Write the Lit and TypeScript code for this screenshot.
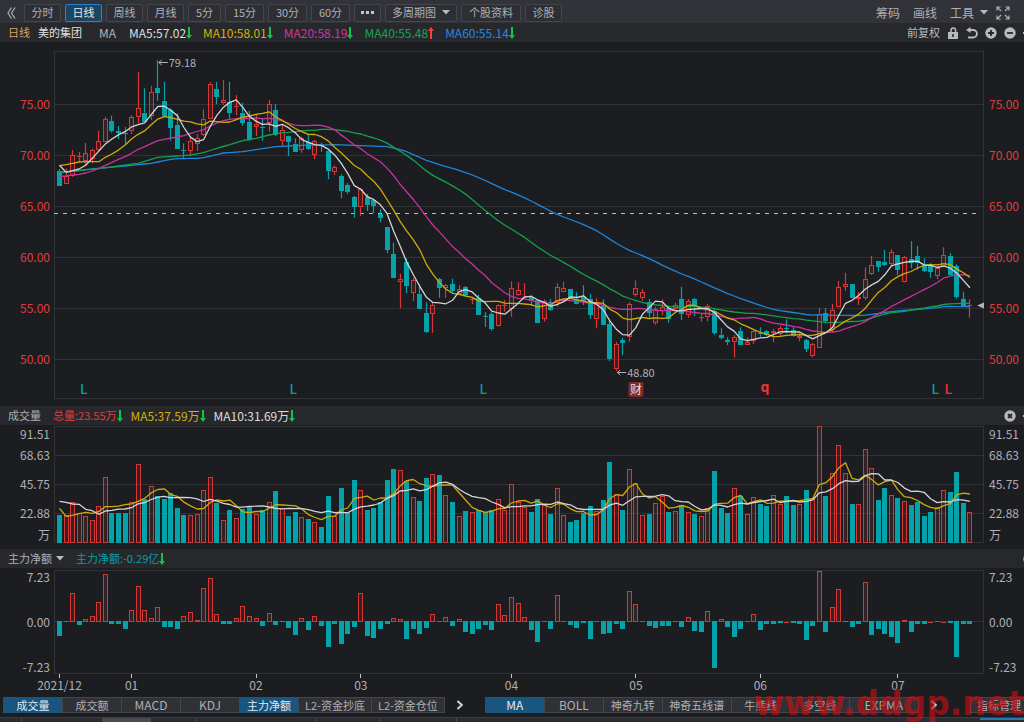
import { LitElement, html, svg, css } from "lit";
import { customElement, state } from "lit/decorators.js";
import { classMap } from "lit/directives/class-map.js";

type Candle = { up: boolean; high: number; low: number; top: number; bottom: number };

// Each row: r(ise) or c(yan fall), high, low, body top, body bottom, in thirds of a pixel.
const read = (base: number, rows: string): Candle[] =>
  rows
    .trim()
    .split(/\s*;\s*/)
    .map((row) => {
      const [kind, ...n] = row.split(" ");
      const [high, low, top, bottom] = n.map((v) => Number(v) + base);
      return { up: kind === "r", high, low, top, bottom };
    });

const CANDLES: Candle[] = [
  ...read(24, `c 357 408 363 408;r 355 402 378 402;r 300 380 316 378;r 306 335 318 322;r 279 348 310 333;
    r 296 340 300 328;r 242 306 273 300;r 200 275 208 275;c 197 248 213 244;c 228 267 242 248;
    c 231 284 248 252;r 196 252 202 244;r 66 220 175 202;c 115 215 188 215;r 107 210 127 199;
    c 31 152 114 129;c 96 197 152 197;c 175 272 180 235;c 190 298 225 298;c 280 325 300 304;
    r 261 312 273 302;r 252 303 264 281;r 178 258 206 256;r 96 207 101 207;c 96 163 117 140;
    r 90 164 150 160;c 96 206 157 188;r 135 196 168 172;c 158 227 188 219;c 183 272 216 270;
    r 193 258 222 230;c 204 272 230 235;r 150 245 162 220;c 163 259 180 256;r 225 288 240 272`),
  ...read(234, `c 47 108 48 66;c 55 97 71 97;r 50 98 55 90;c 43 90 65 88;r 60 117 64 104;
    c 68 95 74 77;c 87 178 92 153;r 136 165 142 157;c 163 235 169 212;c 190 222 195 217;
    c 228 293 231 260;r 205 288 207 262;c 222 273 232 254;c 238 279 240 258;c 268 307 281 293;
    c 320 400 321 389;c 368 473 402 473;r 461 565 477 486;c 415 520 425 497;r 473 543 481 518;
    c 492 566 523 566;c 547 639 579 636;r 548 638 556 581;c 473 533 478 503;r 492 533 496 503;
    c 476 520 492 513;r 496 524 507 523;c 498 527 501 526;r 530 552 537 540;c 524 585 533 585;
    c 577 621 588 592;c 577 632 582 627;r 553 620 554 619;r 540 575 555 558`),
  ...read(654, `r 64 170 85 148;r 67 107 90 104;r 70 118 110 113;c 106 138 110 124;c 120 188 120 188;
    r 118 185 122 176;c 118 152 127 150;r 70 140 81 130;r 65 97 85 95;c 87 116 87 116;
    c 97 133 116 131;c 76 135 112 124;c 102 176 117 165;r 115 205 127 178;c 118 195 135 195;
    c 183 303 193 298;r 245 333 253 328;c 233 286 240 248;r 127 245 132 232;r 61 110 83 104;
    r 87 122 97 115;c 117 172 125 158;r 140 195 147 190;r 118 165 142 152;c 140 188 145 177;
    r 128 150 135 148;c 80 180 117 161;r 117 173 124 166;c 114 168 118 138;r 160 185 170 174;
    r 132 184 137 170;c 146 224 153 219;c 205 238 224 233;c 232 255 240 245;r 226 293 232 245;
    c 202 255 213 255`),
  ...read(534, `r 352 375 366 374;r 328 372 332 362;c 322 350 338 343;c 330 348 333 345;r 326 367 332 340;
    r 318 352 325 341;c 298 340 325 328;c 318 350 330 347;r 340 364 348 353;c 357 396 361 386;
    r 368 412 373 407;r 263 383 281 383;c 265 310 279 303;r 252 338 271 330;r 183 262 202 260;
    r 158 212 193 200;c 192 235 192 235;r 216 255 232 236;r 142 240 178 233;r 108 165 136 163;
    c 122 155 123 140;c 90 138 125 136;r 88 136 97 132;c 105 165 105 150;r 108 187 112 185;
    c 63 145 117 128;c 78 150 108 130;c 115 156 137 153;c 130 173 137 156;r 138 178 145 167;
    r 82 140 105 142;c 100 165 108 164;c 133 236 138 230;c 215 262 238 262;r 238 293 255 258`),
];

// Top edge of each volume column, in thirds of a pixel.
const VOLUME = [
  346, 346, 305, 338, 349, 361, 319, 232, 340, 340, 340, 307, 192, 296, 259, 289, 296, 279, 323, 344,
  346, 343, 271, 232, 308, 361, 329, 355, 326, 319, 343, 329, 307, 273, 323, 349, 337, 352, 358, 367,
  382, 287, 349, 265, 337, 239, 271, 330, 323, 307, 241, 206, 211, 244, 291, 304, 234, 223, 226, 286,
  307, 349, 332, 337, 331, 337, 331, 296, 330, 251, 307, 321, 337, 296, 316, 343, 263, 344, 366, 360,
  340, 318, 333, 301, 186, 283, 329, 206, 248, 344, 343, 310, 287, 337, 333, 315, 337, 341, 347, 325,
  213, 323, 340, 265, 288, 341, 291, 312, 317, 285, 313, 287, 315, 311, 270, 294, 79, 287, 220, 136,
  220, 312, 311, 147, 203, 300, 265, 286, 295, 304, 315, 307, 348, 337, 322, 271, 276, 217, 310, 336,
];

// Signed height of each net-inflow column, in thirds of a pixel.
const FLOW = [
  -44, 4, 87, -11, 9, 17, 60, 144, -10, -8, -25, 36, 107, 36, 12, 45, -17, -17, -25, 17,
  29, 6, 101, 132, 25, -8, -8, 12, 48, 17, 12, -14, 26, -11, -2, -20, -41, 12, -28, 17,
  -14, -78, -8, -70, -38, -17, 87, -44, -50, -23, -8, 12, 9, -53, -23, -38, -22, 23, 2, 15,
  -14, 9, -32, -38, -23, -11, -28, 54, 20, 75, 57, 15, -28, -64, 4, -23, 81, 4, -11, -20,
  -5, -53, 4, -38, -35, -10, -23, 93, 54, 4, -14, -22, -14, -14, 4, -17, 15, -31, -34, 33,
  -140, 9, -17, -47, -25, 4, 25, -28, -10, -8, -5, 1, -5, -8, -58, -14, 154, -33, 45, 99,
  -1, -17, -10, 120, -41, -25, -38, -47, -67, 7, -32, -8, -10, 1, 4, 1, -5, -107, -8, -8,
];

type Knot = [number, number];

/** Moving average; the days before a full window exist are interpolated between the given knots. */
function average(values: number[], span: number, lead: Knot[]): number[] {
  return values.map((_, i) => {
    if (i >= span - 1) {
      let sum = 0;
      for (let k = i - span + 1; k <= i; k++) sum += values[k];
      return sum / span;
    }
    const next = lead.findIndex((k) => k[0] >= i);
    if (next < 0) return lead[lead.length - 1][1];
    if (next === 0) return lead[0][1];
    const [a, b] = [lead[next - 1], lead[next]];
    return a[1] + ((b[1] - a[1]) * (i - a[0])) / (b[0] - a[0]);
  });
}
const each = (list: number[], add = 0): Knot[] => list.map((v, i) => [i, v + add]);
const raise = (list: Knot[], add: number): Knot[] => list.map(([i, v]) => [i, v + add]);

const CLOSES = CANDLES.map((c) => (c.up ? c.top : c.bottom));
const PRICE_LINES: [string, number[]][] = [
  ["#1c86dc", average(CLOSES, 60, raise([[0, 368], [5, 357], [10, 348], [14, 340], [17, 328], [18, 326], [21, 325],
    [22, 323], [25, 309], [28, 305], [31, 296], [33, 290], [37, 286], [42, 284], [46, 287], [50, 290], [52, 299],
    [53, 305], [56, 331], [59, 350]], 24))],
  ["#14a04a", average(CLOSES, 40, raise([[0, 366], [3, 362], [6, 355], [9, 348], [12, 340], [15, 322], [17, 319],
    [19, 317], [20, 315], [22, 308], [24, 295], [26, 284], [28, 272], [30, 265], [32, 255], [34, 248], [35, 247],
    [38, 241]], 24))],
  ["#c8329c", average(CLOSES, 20, each([379, 378, 375, 373, 369, 363, 356, 346, 337, 328, 320, 310, 298, 290, 281,
    272, 268, 264, 261], 24))],
  ["#d0aa08", average(CLOSES, 10, each([347, 344, 340, 336, 335, 335, 335, 322, 312], 24))],
  ["#d4d4d6", average(CLOSES, 5, each([346, 367, 362, 357], 24))],
];
const VOLUME_LINES: [string, number[]][] = [
  ["#d0aa08", average(VOLUME, 5, each([325, 349, 346, 341]))],
  ["#d4d4d6", average(VOLUME, 10, each([304, 307, 312, 313, 328, 332, 343, 333, 331]))],
];

const MONTHS: [number, string][] = [
  [0, "2021/12"], [11, "01"], [30, "02"], [46, "03"], [69, "04"], [88, "05"], [107, "06"], [128, "07"],
];
const PERIODS = ["分时", "日线", "周线", "月线", "5分", "15分", "30分", "60分"];
const AVERAGES: [string, string, boolean][] = [
  ["MA5:57.02", "white", false],
  ["MA10:58.01", "yellow", false],
  ["MA20:58.19", "pink", false],
  ["MA40:55.48", "green", true],
  ["MA60:55.14", "blue", false],
];
const PRICES = ["75.00", "70.00", "65.00", "60.00", "55.00", "50.00"];
const VOLUMES = ["91.51", "68.63", "45.75", "22.88", "万"];
const FLOWS = ["7.23", "0.00", "-7.23"];
const LOWER_TABS = ["成交量", "成交额", "MACD", "KDJ", "主力净额", "L2-资金抄底", "L2-资金仓位"];
const UPPER_TABS = ["MA", "BOLL", "神奇九转", "神奇五线谱", "牛熊线", "多空线", "EXPMA"];

const trend = (up: boolean) => html`<svg width="6" height="12" viewBox="0 0 6 12" aria-hidden="true">
  <path fill=${up ? "#ff3b3b" : "#12c24e"} d=${up ? "M3 0 6 4H4V12H2V4H0Z" : "M3 12 6 8H4V0H2V8H0Z"} />
</svg>`;
const caret = html`<svg width="8" height="5" viewBox="0 0 8 5" aria-hidden="true"><path d="M0 0H8L4 4.5Z" fill="#b9babd" /></svg>`;
const chevron = html`<svg width="8" height="10" viewBox="0 0 8 10" aria-hidden="true">
  <path d="M1.5 1 5.8 5 1.5 9" fill="none" stroke="currentColor" stroke-width="2" /></svg>`;
const gear = html`<svg width="12" height="12" viewBox="0 0 12 12" aria-hidden="true">
  <circle cx="6" cy="6" r="3" fill="none" stroke="currentColor" stroke-width="2" />
  <path d="M6 0V3M6 9V12M0 6H3M9 6H12M2 2 4 4M8 8 10 10M10 2 8 4M4 8 2 10" stroke="currentColor" stroke-width="2" /></svg>`;
const disc = (mark: string) => html`<svg width="12" height="12" viewBox="0 0 12 12" aria-hidden="true">
  <circle cx="6" cy="6" r="5.7" fill="currentColor" /><path d=${mark} stroke="#26282c" stroke-width="1.8" /></svg>`;

@customElement("app-root")
export class AppRoot extends LitElement {
  @state() private plotWidth = 930;
  @state() private period = "日线";
  @state() private overlay = "MA";
  private observer?: ResizeObserver;

  static styles = css`
    :host {
      display: block;
      position: relative;
      overflow: hidden;
      background: #1c1d21;
      color: #aeb0b4;
      font: 11px/16px "Noto Sans CJK SC", "Noto Sans", sans-serif;
    }
    svg { display: block; flex: none; }
    button, select {
      margin: 0;
      padding: 0;
      border: 0;
      background: none;
      color: inherit;
      font: inherit;
      white-space: nowrap;
      cursor: pointer;
    }
    select { appearance: none; }
    .toolbar, .band, .tabs, .strip, .icons, .group, .tools { display: flex; align-items: center; }
    .toolbar {
      height: 23px;
      padding: 2px 14px 0 7px;
      box-sizing: border-box;
      gap: 4px;
      background: #323338;
    }
    .collapse { width: 13px; }
    .period {
      display: flex;
      align-items: center;
      justify-content: center;
      gap: 6px;
      box-sizing: border-box;
      height: 18px;
      min-width: 37px;
      padding: 0 6px;
      line-height: 15px;
      border: 1px solid #45464b;
      border-radius: 2px;
      background: #2e2f34;
    }
    .period.narrow { min-width: 33px; }
    .period.wide { min-width: 39px; }
    .period.dots { min-width: 27px; }
    .period.roomy { min-width: 60px; }
    .period.picked { border-color: #1f86cf; background: #1d4460; color: #e4e8ec; }
    .menu select { padding-right: 14px; line-height: 15px; }
    .menu svg { margin-left: -14px; pointer-events: none; }
    .push { margin-left: auto; }
    .tools { gap: 13px; font-size: 12px; }
    .tools button { display: flex; align-items: center; gap: 6px; }
    .screen { margin-left: 4px; }
    .band {
      height: 19px;
      padding-left: 8px;
      background: #26282c;
      line-height: 15px;
    }
    .readings { display: flex; gap: 11px; }
    .readings.tight { gap: 8px; }
    .reading { display: flex; align-items: center; font-size: 12px; line-height: 15px; white-space: nowrap; }
    .small { font-size: 11px; }
    .orange { color: #d9a066; }
    .white { color: #dededf; }
    .yellow { color: #d6b008; }
    .pink { color: #cf35a2; }
    .green { color: #14a84e; }
    .blue { color: #1e8ce4; }
    .red { color: #e03c3c; }
    .teal { color: #0a9ea4; }
    .name { margin: 0 17px 0 8px; color: #e0e0e2; font-size: 11px; font-weight: 400; }
    .kind { margin-right: 13px; font-size: 12px; }
    .icons { gap: 7px; color: #b9babd; }
    .bleed { margin-right: -11px; }
    .panel { display: grid; grid-template-columns: 54px minmax(0, 1fr) 40px; }
    .panel svg { width: 100%; overflow: visible; }
    .scale { margin: 0; padding: 0 5px; list-style: none; display: grid; align-content: start; font-size: 12px; }
    .scale li { display: flex; align-items: center; }
    .scale.left { padding: 0 4px 0 0; justify-items: end; }
    .scale.price { grid-auto-rows: 51px; padding-top: 36px; color: #e03c3c; }
    .volume { grid-template-rows: 18px 24px 34px 24px 20px; }
    .flow { grid-template-rows: 18px 72px 18px; }
    .picker { display: flex; align-items: center; margin-right: 12px; }
    .picker select { padding-right: 12px; }
    .picker svg { margin-left: -8px; pointer-events: none; }
    .tabs { height: 16px; padding-left: 3px; }
    .group { border-right: 1px solid #45464b; }
    .tab {
      box-sizing: border-box;
      height: 16px;
      min-width: 59px;
      padding: 0 6px;
      line-height: 14px;
      border: 1px solid #45464b;
      border-right: 0;
      background: #303136;
    }
    .tab.picked { background: #185680; border-color: #185680; color: #e4e8ec; }
    .tab.latin { font-size: 12px; }
    .tab.last { min-width: 69px; }
    .next { padding: 0 11px; color: #d0d1d3; }
    .second { margin-left: 10px; }
    .manage { margin-left: auto; margin-right: -6px; min-width: 60px; text-align: left; }
    .strip {
      height: 5px;
      margin-top: 4px;
      background: #2b2c31;
      border-top: 1px solid #3c3d42;
      box-sizing: border-box;
    }
    .strip span { height: 4px; box-sizing: border-box; border-right: 1px solid #44454a; }
    .strip .lit { background: #4a4b50; }
    .strip .current { width: 44px; margin-left: auto; border-top: 2px solid #1f78b8; border-right: 0; }
    .watermark {
      position: absolute;
      right: 0;
      bottom: -2px;
      color: rgba(196, 14, 18, 0.66);
      font: bold 33px/40px "DejaVu Sans", sans-serif;
      pointer-events: none;
    }
    .note { font-size: 11px; fill: #aeb0b4; }
    .date { font-size: 12px; fill: #aeb0b4; text-anchor: middle; }
    .mark { font: 500 14px "Noto Sans", sans-serif; text-anchor: middle; }
    .bold { font-weight: 700; }
    .badge { font-size: 12px; fill: #ecdcdc; text-anchor: middle; }
  `;

  firstUpdated() {
    const plot = this.renderRoot.querySelector(".plot");
    if (!plot) return;
    this.observer = new ResizeObserver((entries) => {
      this.plotWidth = Math.round(entries[0].contentRect.width);
    });
    this.observer.observe(plot);
  }

  disconnectedCallback() {
    super.disconnectedCallback();
    this.observer?.disconnect();
  }

  private x(i: number) {
    return ((5.5 + 6.55 * i) * this.plotWidth) / 930;
  }

  private centre(i: number) {
    return Math.floor(this.x(i)) + 0.5;
  }

  private curve([color, values]: [string, number[]], lift = 0) {
    const points = values.map((v, i) => `${this.x(i).toFixed(1)},${(v / 3 - lift).toFixed(1)}`).join(" ");
    return svg`<polyline points=${points} fill="none" stroke=${color} stroke-width="1.3" stroke-linejoin="round" />`;
  }

  private frame(top: number, bottom: number, lines: number[]) {
    return svg`<rect x="0.5" y=${top} width=${this.plotWidth - 1} height=${bottom - top} fill="none" stroke="#323337" />
      ${lines.map((y) => svg`<path d="M0 ${y}H${this.plotWidth}" stroke="#323337" />`)}`;
  }

  private column(i: number, top: number, bottom: number, up: boolean) {
    const c = this.centre(i);
    const t = Math.round(top);
    const b = Math.max(Math.round(bottom), t + 1);
    if (!up) return svg`<rect x=${c - 2.5} y=${t} width="5" height=${b - t} fill="#04a3aa" />`;
    if (b - t < 3) return svg`<rect x=${c - 2.5} y=${t} width="5" height=${b - t} fill="#d63838" />`;
    return svg`<rect x=${c - 2} y=${t + 0.5} width="4" height=${b - t - 1} fill="#cf3838" fill-opacity="0.14" stroke="#d63838" />`;
  }

  private candle(c: Candle, i: number) {
    const m = this.centre(i);
    const color = c.up ? "#d63838" : "#04a3aa";
    return svg`<path d="M${m} ${c.high / 3}V${c.top / 3}M${m} ${c.bottom / 3}V${c.low / 3}" stroke=${color} stroke-width="1.2" />
      ${this.column(i, c.top / 3, c.bottom / 3, c.up)}`;
  }

  private priceChart() {
    const w = this.plotWidth;
    const low = this.x(85);
    const high = this.x(15);
    const marks: [number, string, string][] = [
      [3.7, "L", "#0a9ea4"], [35.7, "L", "#0a9ea4"], [64.7, "L", "#0a9ea4"], [107.7, "q", "#f03434"],
      [133.7, "L", "#0a9ea4"], [135.7, "L", "#f03434"],
    ];
    return html`<svg class="plot" height="364" role="img" aria-label="日线">
      ${this.frame(9.5, 356.5, [62.5, 113.5, 164.5, 215.5, 266.5, 317.5])}
      <path d="M0 171.5H${w - 8}" stroke="#e0c440" stroke-dasharray="4 5" />
      ${CANDLES.map((c, i) => this.candle(c, i))}
      ${PRICE_LINES.map((l) => this.curve(l))}
      <path d="M${high + 1} 20.5H${high + 10}M${high + 4} 18 ${high + 1} 20.5 ${high + 4} 23" fill="none" stroke="#aeb0b4" />
      <text class="note" x=${high + 11} y="25">79.18</text>
      <path d="M${low + 1} 330.5H${low + 10}M${low + 4} 328 ${low + 1} 330.5 ${low + 4} 333" fill="none" stroke="#aeb0b4" />
      <text class="note" x=${low + 11} y="335">48.80</text>
      ${marks.map(([i, t, color]) => svg`<text class="mark ${t === "q" ? "bold" : ""}" x=${this.x(i)} y=${t === "q" ? 350 : 352} fill=${color}>${t}</text>`)}
      <rect x=${this.x(88) - 7.5} y="340" width="15" height="15" rx="2" fill="#7e2b2d" />
      <text class="badge" x=${this.x(88)} y="352">财</text>
      <path d="M${w - 7} 263.5 ${w} 260.5V266.5Z" fill="#b4b5b8" />
    </svg>`;
  }

  private volumeChart() {
    return html`<svg height="124" role="img" aria-label="成交量">
      ${this.frame(1.5, 117.5, [30.5, 59.5, 88.5])}
      ${VOLUME.map((v, i) => this.column(i, v / 3 - 25, 118, CANDLES[i].up))}
      ${VOLUME_LINES.map((l) => this.curve(l, 25))}
    </svg>`;
  }

  private flowChart() {
    return html`<svg height="129" role="img" aria-label="主力净额">
      ${this.frame(2.5, 105.5, [53.5])}
      ${FLOW.map((v, i) => (v > 0 ? this.column(i, 54 - v / 3, 54, true) : this.column(i, 53, 53 - v / 3, false)))}
      ${MONTHS.map(([i, label]) => svg`<path d="M${this.centre(i)} 106V110" stroke="#c4c5c8" />
        <text class="date" x=${this.x(i)} y="122">${label}</text>`)}
    </svg>`;
  }

  private scale(kind: string, side: string, labels: string[]) {
    return html`<ul class="scale ${side} ${kind}">${labels.map((l) => html`<li>${l}</li>`)}</ul>`;
  }

  private panel(kind: string, labels: string[], chart: unknown) {
    return html`<section class="panel">${this.scale(kind, "left", labels)}${chart}${this.scale(kind, "right", labels)}</section>`;
  }

  private tab(label: string, picked: boolean, pick: () => void) {
    const classes = { tab: true, picked, latin: /^[A-Z]+$/.test(label), last: label === "EXPMA" || label === "神奇五线谱" };
    return html`<button class=${classMap(classes)} aria-pressed=${picked} @click=${pick}>${label}</button>`;
  }

  render() {
    return html`
      <nav class="toolbar">
        <button class="collapse" aria-label="收起">
          <svg width="9" height="12" viewBox="0 0 9 12"><path d="M4.5 .5 1 6 4.5 11.5M8 .5 4.5 6 8 11.5" fill="none" stroke="#aeb0b4" stroke-width="1.2" /></svg>
        </button>
        ${PERIODS.map((p) => html`<button
          class=${classMap({ period: true, picked: p === this.period, narrow: p === "5分", wide: p.length === 3 })}
          aria-pressed=${p === this.period} @click=${() => (this.period = p)}>${p}</button>`)}
        <button class="period dots" aria-label="更多周期">
          <svg width="13" height="3" viewBox="0 0 13 3"><path d="M0 0H3V3H0ZM5 0H8V3H5ZM10 0H13V3H10Z" fill="#c4c5c8" /></svg>
        </button>
        <label class="period menu"><select aria-label="多周期图"><option>多周期图</option></select>${caret}</label>
        <button class="period roomy">个股资料</button>
        <button class="period">诊股</button>
        <div class="tools push">
          <button>筹码</button><button>画线</button><button aria-haspopup="menu">工具 ${caret}</button>
        </div>
        <button class="screen" aria-label="全屏">
          <svg width="14" height="14" viewBox="0 0 14 14" fill="none" stroke="#aeb0b4" stroke-width="1.2">
            <path d="M1 4.5V1H4.5M9.5 1H13V4.5M13 9.5V13H9.5M4.5 13H1V9.5M1 1 5 5M13 1 9 5M13 13 9 9M1 13 5 9" /></svg>
        </button>
      </nav>

      <header class="band">
        <span class="orange">日线</span>
        <h1 class="name">美的集团</h1>
        <span class="kind">MA</span>
        <div class="readings">
          ${AVERAGES.map(([text, color, up]) => html`<span class="reading ${color}">${text}${trend(up)}</span>`)}
        </div>
        <div class="icons bleed push">
          <button>前复权</button>
          <button aria-label="锁定"><svg width="12" height="12" viewBox="0 0 12 12">
            <path d="M1 5H11V12H1Z" fill="currentColor" /><path d="M4 5V3.2A2.3 2.3 0 0 1 8.6 3.2V5" fill="none" stroke="currentColor" stroke-width="1.5" />
            <path d="M5.2 7H6.8V10H5.2Z" fill="#26282c" /></svg></button>
          <button aria-label="撤销"><svg width="12" height="12" viewBox="0 0 12 12">
            <path d="M4.5 0V6L0 3Z" fill="currentColor" /><path d="M3 3H7.2A3.5 3.5 0 0 1 7.2 10.5H2" fill="none" stroke="currentColor" stroke-width="1.8" /></svg></button>
          <button aria-label="放大">${disc("M6 3V9M3 6H9")}</button>
          <button aria-label="缩小">${disc("M3 6H9")}</button>
          <button aria-label="设置">${gear}</button>
        </div>
      </header>
      ${this.panel("price", PRICES, this.priceChart())}

      <header class="band">
        <span class="picker">成交量</span>
        <div class="readings tight">
          <span class="reading small red">总量:23.55万${trend(false)}</span>
          <span class="reading yellow">MA5:37.59万${trend(false)}</span>
          <span class="reading white">MA10:31.69万${trend(false)}</span>
        </div>
        <div class="icons bleed push">
          <button aria-label="关闭">${disc("M4 4 8 8M8 4 4 8")}</button>
          <button aria-label="设置">${gear}</button>
        </div>
      </header>
      ${this.panel("volume", VOLUMES, this.volumeChart())}

      <header class="band">
        <label class="picker"><select aria-label="指标"><option>主力净额</option></select>${caret}</label>
        <span class="reading small teal">主力净额:-0.29亿${trend(false)}</span>
        <div class="icons bleed push"><button aria-label="关闭">${disc("M4 4 8 8M8 4 4 8")}</button></div>
      </header>
      ${this.panel("flow", FLOWS, this.flowChart())}

      <nav class="tabs">
        <div class="group">${LOWER_TABS.map((t) => this.tab(t, t === "成交量" || t === "主力净额", () => {}))}</div>
        <button class="next" aria-label="更多副图指标">${chevron}</button>
        <div class="group second">
          ${UPPER_TABS.map((t) => this.tab(t, t === this.overlay, () => (this.overlay = t)))}
        </div>
        <button class="next" aria-label="更多主图指标">${chevron}</button>
        <button class="tab manage">指标管理</button>
      </nav>
      <footer class="strip">
        ${[22, 81, 48, 46, 120, 64, 76].map((w, i) => html`<span class=${i === 2 ? "lit" : ""} style="width:${w}px"></span>`)}
        <span class="current"></span>
      </footer>
      <div class="watermark">www.ddgp.net</div>
    `;
  }
}
